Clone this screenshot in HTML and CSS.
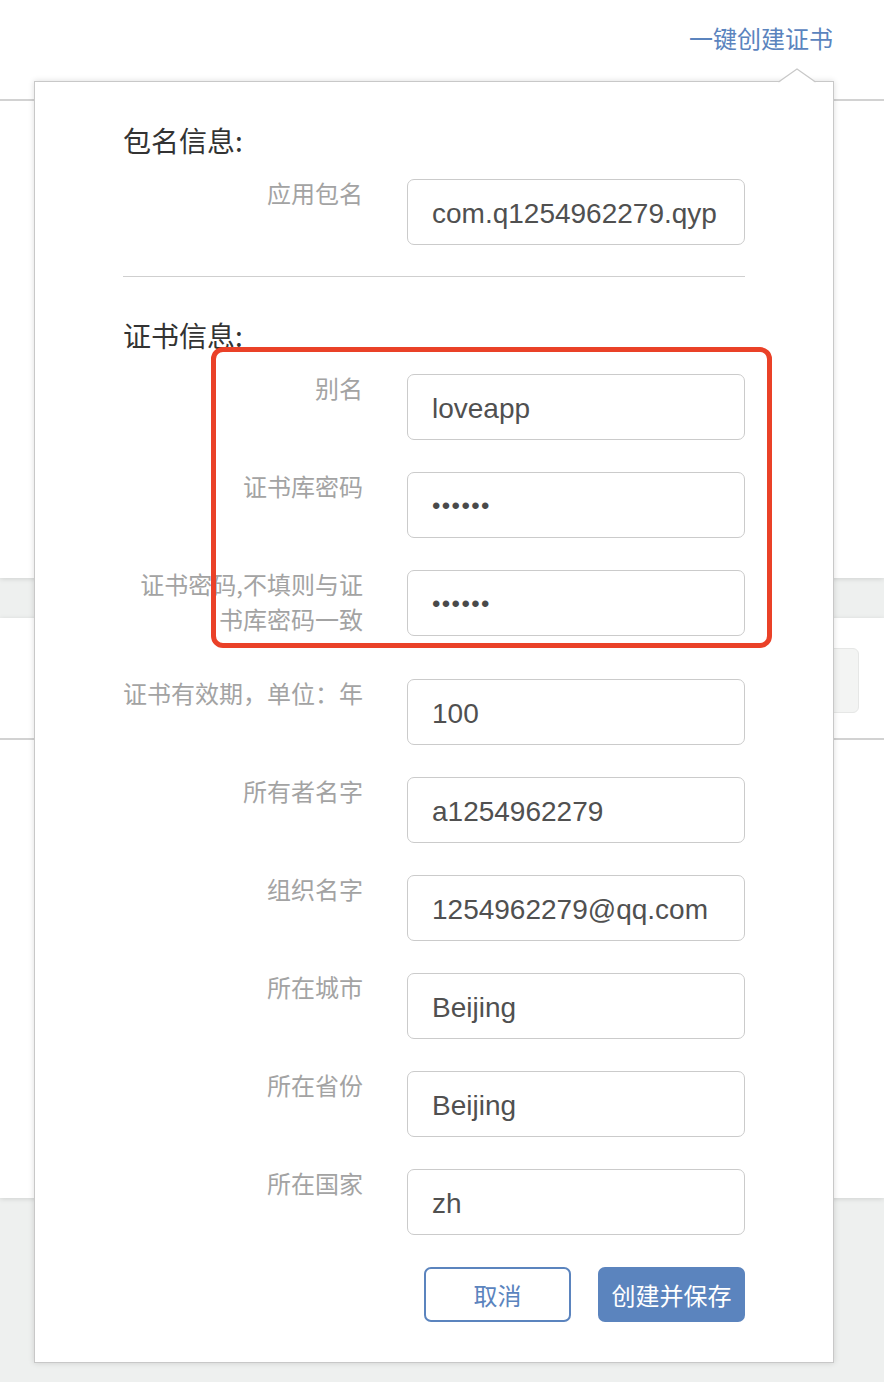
FILE: index.html
```html
<!DOCTYPE html>
<html lang="zh-CN">
<head>
<meta charset="utf-8">
<title>一键创建证书</title>
<link rel="stylesheet" href="styles.css">
</head>
<body>
  <div class="page">
    <section class="card card-top">
      <div class="toolbar">
        <a class="create-link" href="#">一键创建证书</a>
      </div>
      <div class="rule"></div>
    </section>
    <section class="card card-bottom">
      <div class="ghost-field"></div>
      <div class="rule rule-bottom"></div>
    </section>
  </div>

  <svg class="caret" width="38" height="15" viewBox="0 0 38 15">
    <polygon points="0,15 19,1 38,15" fill="#fff"/>
    <polyline points="0.5,14 19,1 37.5,14" fill="none" stroke="#c8c8c8" stroke-width="1.2"/>
  </svg>

  <div class="popover">
    <div class="section">
      <h2 class="section-title">包名信息:</h2>
      <div class="row">
        <label class="label">应用包名</label>
        <input class="field" type="text" value="com.q1254962279.qyp">
      </div>
    </div>
    <div class="divider"></div>
    <div class="section section-cert">
      <h2 class="section-title">证书信息:</h2>
      <div class="row">
        <label class="label">别名</label>
        <input class="field" type="text" value="loveapp">
      </div>
      <div class="row">
        <label class="label">证书库密码</label>
        <input class="field field-secret" type="password" value="123456">
      </div>
      <div class="row">
        <label class="label">证书密码,不填则与证书库密码一致</label>
        <input class="field field-secret" type="password" value="123456">
      </div>
      <div class="row">
        <label class="label">证书有效期，单位：年</label>
        <input class="field" type="text" value="100">
      </div>
      <div class="row">
        <label class="label">所有者名字</label>
        <input class="field" type="text" value="a1254962279">
      </div>
      <div class="row">
        <label class="label">组织名字</label>
        <input class="field" type="text" value="1254962279@qq.com">
      </div>
      <div class="row">
        <label class="label">所在城市</label>
        <input class="field" type="text" value="Beijing">
      </div>
      <div class="row">
        <label class="label">所在省份</label>
        <input class="field" type="text" value="Beijing">
      </div>
      <div class="row">
        <label class="label">所在国家</label>
        <input class="field" type="text" value="zh">
      </div>
    </div>
    <div class="actions">
      <button class="btn btn-cancel" type="button">取消</button>
      <button class="btn btn-primary" type="button">创建并保存</button>
    </div>
  </div>

  <div class="annotation"></div>
</body>
</html>
```

FILE: styles.css
```css
* {
  box-sizing: border-box;
}

html, body {
  margin: 0;
  padding: 0;
}

body {
  background: #eef0ef;
  font-family: "Noto Sans CJK SC", "Noto Sans", sans-serif;
  width: 884px;
  height: 1382px;
  overflow: hidden;
  position: relative;
}

.page {
  display: flex;
  flex-direction: column;
  gap: 40px;
}

.card {
  background: #fff;
  box-shadow: 0 1px 5px rgba(0, 0, 0, 0.13);
}

.card-top {
  height: 578px;
}

.toolbar {
  height: 99px;
  display: flex;
  justify-content: flex-end;
  padding: 21px 51px 0 0;
}

.create-link {
  font-size: 24px;
  line-height: 34px;
  color: #5b84be;
  text-decoration: none;
}

.rule {
  height: 2px;
  background: #d2d2d2;
}

.card-bottom {
  height: 580px;
  padding-top: 30px;
  display: flex;
  flex-direction: column;
  align-items: flex-end;
}

.ghost-field {
  width: 300px;
  height: 65px;
  margin-right: 25px;
  background: #f3f4f3;
  border: 1px solid #e6e7e6;
  border-radius: 6px;
}

.rule-bottom {
  align-self: stretch;
  margin-top: 25px;
  height: 2px;
}

.caret {
  position: absolute;
  left: 778px;
  top: 67.5px;
  z-index: 3;
}

.popover {
  position: absolute;
  left: 34px;
  top: 81px;
  width: 800px;
  background: #fff;
  border: 1px solid #c8c8c8;
  box-shadow: 0 0 6px rgba(0, 0, 0, 0.14);
  padding: 38px 88px 40px;
  z-index: 2;
}

.section-title {
  margin: 0 0 19px;
  font-size: 28px;
  line-height: 40px;
  font-weight: normal;
  color: #333;
}

.section-cert {
  padding-top: 38px;
}

.row {
  display: flex;
  align-items: flex-start;
  gap: 44px;
  margin-bottom: 32px;
}

.label {
  flex: 0 0 240px;
  width: 240px;
  margin-top: -4px;
  padding-bottom: 11px;
  text-align: right;
  font-size: 24px;
  line-height: 35px;
  color: #a3a3a3;
}

.field {
  flex: 0 0 338px;
  width: 338px;
  height: 66px;
  margin: 0;
  padding: 4px 24px 0;
  border: 1px solid #cbcbcb;
  border-radius: 7px;
  background: #fff;
  font-family: "Liberation Sans", Arial, sans-serif;
  font-size: 28px;
  color: #505050;
  outline: none;
}

.field-secret {
  font-size: 24px;
  letter-spacing: 1.4px;
  padding-top: 2px;
  padding-left: 24px;
  color: #4a4a4a;
}

.divider {
  height: 1px;
  background: #cfcfcf;
  margin-top: -1px;
}

.actions {
  display: flex;
  justify-content: flex-end;
  gap: 27px;
}

.btn {
  width: 147px;
  height: 55px;
  border-radius: 7px;
  font-family: "Noto Sans CJK SC", sans-serif;
  font-size: 24px;
  padding: 0;
  cursor: pointer;
}

.btn-cancel {
  background: #fff;
  border: 2px solid #5b84be;
  color: #5b84be;
}

.btn-primary {
  background: #5b84be;
  border: 0;
  color: #fff;
}

.annotation {
  position: absolute;
  left: 211px;
  top: 347px;
  width: 561px;
  height: 301px;
  border: 5px solid #ea4128;
  border-radius: 12px;
  z-index: 4;
  pointer-events: none;
}
```
